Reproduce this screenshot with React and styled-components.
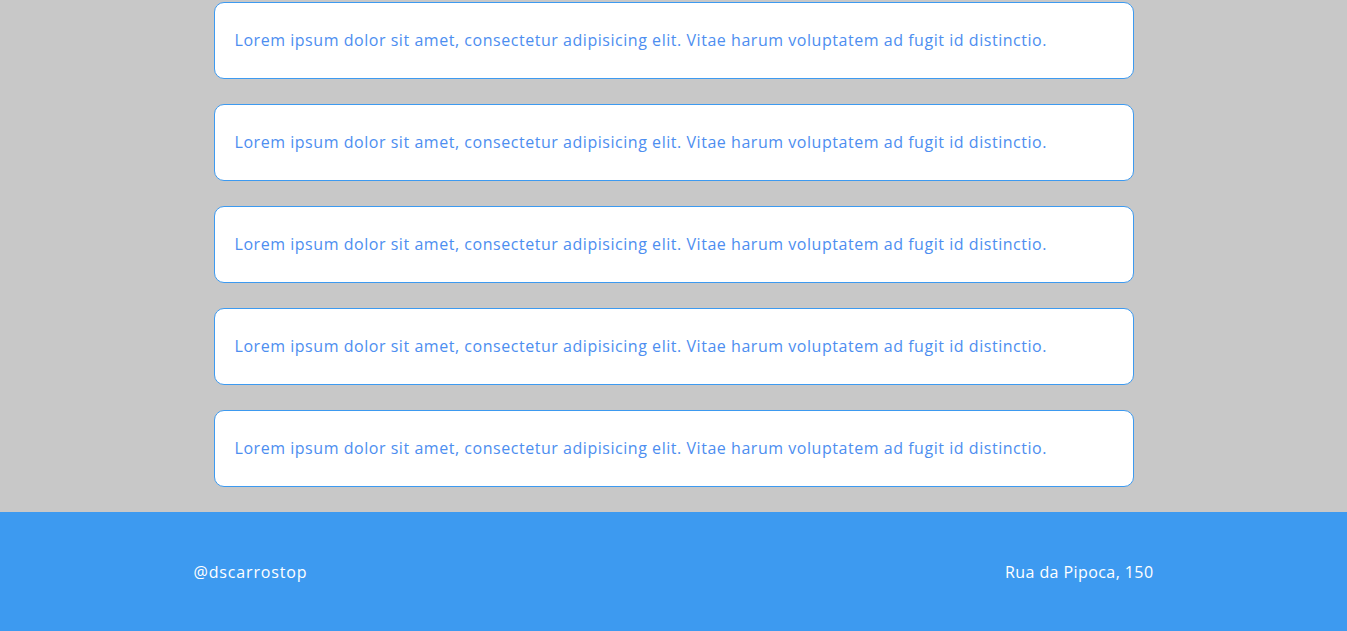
import React from "react";
import styled, { createGlobalStyle } from "styled-components";

const Global = createGlobalStyle`
  html, body { margin: 0; padding: 0; background: #c8c8c8; }
  body { font-family: "Open Sans", "Noto Sans", sans-serif; }
  * { box-sizing: border-box; }
`;

const Page = styled.div`
  display: flex;
  flex-direction: column;
  min-height: 631px;
`;

const Main = styled.main`
  display: flex;
  flex-direction: column;
  align-items: center;
  gap: 25px;
  padding: 2px 0 25px;
`;

const Card = styled.div`
  width: 920px;
  height: 77px;
  display: flex;
  align-items: center;
  padding: 0 20px 2px;
  background: #ffffff;
  border: 1px solid #3d9af0;
  border-radius: 10px;
`;

const CardText = styled.p`
  margin: 0;
  font-size: 16px;
  line-height: 24px;
  letter-spacing: 0.54px;
  color: #4d8ef0;
  white-space: nowrap;
`;

const Footer = styled.footer`
  height: 120px;
  background: #3d9af0;
  display: flex;
  justify-content: center;
  align-items: center;
`;

const FooterInner = styled.div`
  width: 960px;
  display: flex;
  justify-content: space-between;
  align-items: center;
  color: #ffffff;
  font-size: 16px;
  font-weight: 500;
`;

const FooterText = styled.span`
  letter-spacing: ${(p) => p.$spacing}px;
`;

const text =
  "Lorem ipsum dolor sit amet, consectetur adipisicing elit. Vitae harum voluptatem ad fugit id distinctio.";

export default function App() {
  return (
    <Page>
      <Global />
      <Main>
        {[0, 1, 2, 3, 4].map((i) => (
          <Card key={i}>
            <CardText>{text}</CardText>
          </Card>
        ))}
      </Main>
      <Footer>
        <FooterInner>
          <FooterText $spacing={0.85}>@dscarrostop</FooterText>
          <FooterText $spacing={0.42}>Rua da Pipoca, 150</FooterText>
        </FooterInner>
      </Footer>
    </Page>
  );
}
